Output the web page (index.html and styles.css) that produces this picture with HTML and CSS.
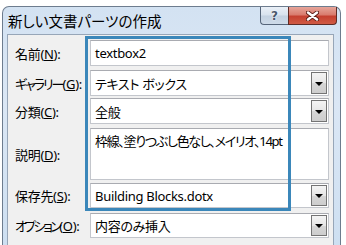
FILE: index.html
```html
<!DOCTYPE html>
<html lang="ja">
<head>
<meta charset="utf-8">
<title>新しい文書パーツの作成</title>
<link rel="stylesheet" href="styles.css">
</head>
<body>
<div class="window">
  <div class="titlebar">
    <span class="title">新しい文書パーツの作成</span>
    <div class="caption-buttons">
      <div class="btn-help">?</div>
      <div class="btn-close">
        <svg width="13" height="10" viewBox="0 0 13 10">
          <path d="M2 1.5 L11 8.5 M11 1.5 L2 8.5" stroke="#5b1e16" stroke-width="4.2" stroke-linecap="round" fill="none"/>
          <path d="M2 1.5 L11 8.5 M11 1.5 L2 8.5" stroke="#ffffff" stroke-width="2.4" stroke-linecap="round" fill="none"/>
        </svg>
      </div>
    </div>
  </div>
  <div class="client">
    <div class="row r1">
      <span class="lbl">名前(<u>N</u>):</span>
      <div class="box"><span class="val">textbox2</span></div>
    </div>
    <div class="row r2">
      <span class="lbl"><span class="kana">ギャラリー</span>(<u>G</u>):</span>
      <div class="box"><span class="val">テキスト ボックス</span><span class="drop"><span class="tri"></span></span></div>
    </div>
    <div class="row r3">
      <span class="lbl">分類(<u>C</u>):</span>
      <div class="box"><span class="val">全般</span><span class="drop"><span class="tri"></span></span></div>
    </div>
    <div class="row r4">
      <span class="lbl">説明(<u>D</u>):</span>
      <div class="box area"><span class="val val-desc">枠線、塗りつぶし色なし、メイリオ、14pt</span></div>
    </div>
    <div class="row r5">
      <span class="lbl">保存先(<u>S</u>):</span>
      <div class="box"><span class="val">Building Blocks.dotx</span><span class="drop"><span class="tri"></span></span></div>
    </div>
    <div class="row r6">
      <span class="lbl"><span class="kana kana-tight">オプション</span>(<u>O</u>):</span>
      <div class="box"><span class="val">内容のみ挿入</span><span class="drop"><span class="tri"></span></span></div>
    </div>
    <div class="highlight"></div>
  </div>
</div>
</body>
</html>
```

FILE: styles.css
```css
html, body {
  margin: 0;
  padding: 0;
  background: #ffffff;
}
body {
  width: 346px;
  height: 245px;
  overflow: hidden;
  font-family: "Noto Sans", "Noto Sans CJK JP", sans-serif;
  font-feature-settings: "palt" 1;
  color: #000;
}
.window {
  margin: 6px 0 0 2px;
  width: 339px;
  height: 245px;
  box-sizing: border-box;
  border: 1px solid #6d7c8e;
  border-bottom: none;
  border-radius: 7px 7px 0 0;
  background: linear-gradient(180deg, #d3e2f2 0%, #dbe7f5 40%, #cddff1 100%);
  padding: 0 6px 0 4px;
  display: flex;
  flex-direction: column;
}
.titlebar {
  height: 27px;
  flex: none;
  display: flex;
  align-items: center;
  margin-right: -4px;
}
.title {
  font-size: 14.5px;
  padding-left: 1px;
  flex: 1;
  line-height: 20px;
}
.caption-buttons {
  align-self: flex-start;
  display: flex;
  margin-right: 1px;
}
.btn-help, .btn-close {
  height: 18px;
  box-sizing: border-box;
  border: 1px solid #56657a;
  border-top: none;
  display: flex;
  align-items: center;
  justify-content: center;
}
.btn-help {
  width: 28px;
  border-right: none;
  border-radius: 0 0 0 4px;
  background: linear-gradient(180deg, #eaf0f7 0%, #d8e2ee 48%, #c3d1e1 52%, #cfdbe9 100%);
  font-family: "DejaVu Sans", sans-serif;
  font-weight: bold;
  font-size: 12px;
  color: #4a586b;
  text-shadow: 0 0 2px #ffffff, 0 0 1px #ffffff;
}
.btn-close {
  width: 49px;
  border-radius: 0 0 4px 0;
  border-color: #5e2b25;
  background: linear-gradient(180deg, #e6a59a 0%, #d97c6e 45%, #c54030 55%, #d05a44 100%);
}
.client {
  position: relative;
  flex: 1;
  background: #f0f0f0;
  border: 1px solid #97a6b8;
  border-bottom: none;
  padding: 5px 0 0 7px;
}
.row {
  display: flex;
  align-items: center;
}
.r1 { height: 26px; }
.r2 { height: 26px; margin-top: 4px; }
.r3 { height: 26px; margin-top: 2px; }
.r4 { height: 52px; margin-top: 4px; }
.r5 { height: 25px; margin-top: 3px; }
.r6 { height: 25px; margin-top: 5px; }
.lbl {
  width: 75px;
  flex: none;
  font-size: 13px;
  letter-spacing: -0.3px;
  white-space: nowrap;
}
.kana {
  letter-spacing: -2px;
}
.kana-tight {
  letter-spacing: -2.6px;
}
.box {
  width: 239px;
  height: 100%;
  box-sizing: border-box;
  background: #ffffff;
  border: 1px solid #c3c6cc;
  border-top-color: #a9abb1;
  display: flex;
  align-items: center;
  font-size: 13px;
}
.val {
  flex: 1;
  padding-left: 4px;
  white-space: nowrap;
  letter-spacing: -0.3px;
}
.val-desc {
  letter-spacing: -1.3px;
}
.area {
  align-items: flex-start;
  padding-top: 2px;
}
.drop {
  width: 16px;
  align-self: stretch;
  margin: 1px;
  box-sizing: border-box;
  border: 1px solid #747474;
  background: linear-gradient(180deg, #f4f4f4 0%, #e6e6e6 50%, #d6d6d6 51%, #cdcdcd 100%);
  display: flex;
  align-items: center;
  justify-content: center;
}
.tri {
  width: 0;
  height: 0;
  border-left: 4px solid transparent;
  border-right: 4px solid transparent;
  border-top: 4px solid #000000;
  margin-top: 1px;
}
.highlight {
  position: absolute;
  left: 77px;
  top: 1px;
  width: 206px;
  height: 175px;
  box-sizing: border-box;
  border: 3px solid #3b87ba;
  pointer-events: none;
}
```
